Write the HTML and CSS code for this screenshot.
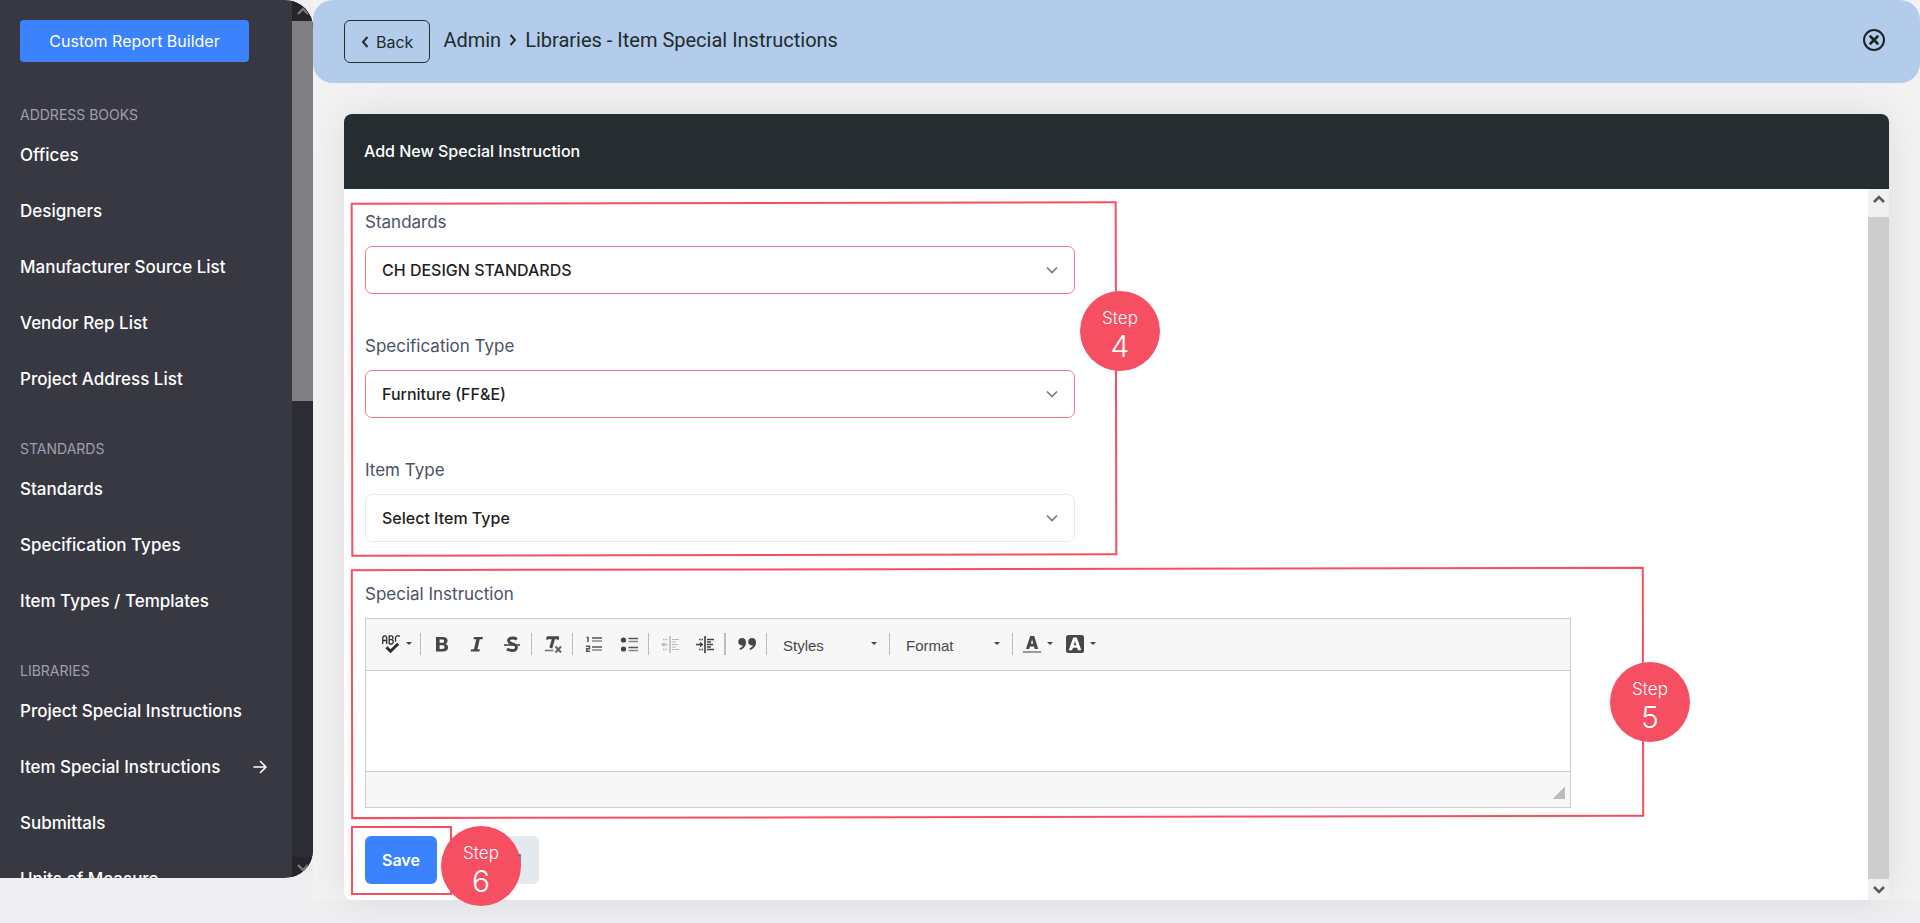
FILE: index.html
```html
<!DOCTYPE html>
<html lang="en">
<head>
<meta charset="utf-8">
<title>Libraries - Item Special Instructions</title>
<link rel="stylesheet" href="styles.css">
</head>
<body>
<div class="app">
  <aside class="sidebar">
    <div class="sidebar-content">
      <button class="report-button" type="button">Custom Report Builder</button>
      <nav class="nav">
        <section class="nav-group">
          <h2 class="nav-title">ADDRESS BOOKS</h2>
          <a class="nav-link" href="#">Offices</a>
          <a class="nav-link" href="#">Designers</a>
          <a class="nav-link" href="#">Manufacturer Source List</a>
          <a class="nav-link" href="#">Vendor Rep List</a>
          <a class="nav-link" href="#">Project Address List</a>
        </section>
        <section class="nav-group">
          <h2 class="nav-title">STANDARDS</h2>
          <a class="nav-link" href="#">Standards</a>
          <a class="nav-link" href="#">Specification Types</a>
          <a class="nav-link" href="#">Item Types / Templates</a>
        </section>
        <section class="nav-group">
          <h2 class="nav-title">LIBRARIES</h2>
          <a class="nav-link" href="#">Project Special Instructions</a>
          <a class="nav-link" href="#">Item Special Instructions
            <svg class="nav-arrow" viewBox="0 0 14 14" width="14" height="14" fill="none" stroke="currentColor" stroke-width="1.6" stroke-linecap="round" stroke-linejoin="round"><path d="M1 7h12M7.5 1.5 13 7l-5.500 5.500"/></svg>
          </a>
          <a class="nav-link" href="#">Submittals</a>
          <a class="nav-link" href="#">Units of Measure</a>
        </section>
      </nav>
    </div>
    <div class="scrollbar scrollbar-dark">
      <div class="scroll-button"><svg viewBox="0 0 12 10" width="12" height="10" fill="none" stroke="currentColor" stroke-width="2.400"><path d="M1 8l5-5 5 5"/></svg></div>
      <div class="scroll-thumb"></div>
      <div class="scroll-track"></div>
      <div class="scroll-button"><svg viewBox="0 0 12 10" width="12" height="10" fill="none" stroke="currentColor" stroke-width="2.400"><path d="M1 2l5 5 5-5"/></svg></div>
    </div>
  </aside>

  <main class="main">
    <header class="topbar">
      <button class="back-button" type="button">
        <svg viewBox="0 0 8 12" width="8" height="12" fill="none" stroke="currentColor" stroke-width="2"><path d="M6.500 1 2 6l4.500 5"/></svg>
        Back
      </button>
      <div class="breadcrumb">
        <a class="crumb" href="#">Admin</a>
        <svg viewBox="0 0 8 12" width="8" height="12" fill="none" stroke="currentColor" stroke-width="2"><path d="M1.500 1 6 6l-4.500 5"/></svg>
        <span>Libraries - Item Special Instructions</span>
      </div>
      <button class="close-button" type="button" aria-label="Close">
        <svg viewBox="0 0 22 22" width="22" height="22" fill="none" stroke="currentColor" stroke-width="2"><circle cx="11" cy="11" r="10"/><path d="M7.500 7.500l7 7M14.500 7.500l-7 7" stroke-width="2.600" stroke-linecap="round"/></svg>
      </button>
    </header>

    <section class="card">
      <h1 class="card-title">Add New Special Instruction</h1>
      <div class="card-body">
        <form class="form">
          <div class="fields">
            <div class="field">
              <label class="label" for="standards">Standards</label>
              <div class="select-wrap">
                <select class="select select-required" id="standards"><option>CH DESIGN STANDARDS</option></select>
                <svg class="chevron" viewBox="0 0 12 8" width="12" height="8" fill="none" stroke="currentColor" stroke-width="1.600"><path d="M1 1.500l5 5 5-5"/></svg>
              </div>
            </div>
            <div class="field">
              <label class="label" for="spec-type">Specification Type</label>
              <div class="select-wrap">
                <select class="select select-required" id="spec-type"><option>Furniture (FF&amp;E)</option></select>
                <svg class="chevron" viewBox="0 0 12 8" width="12" height="8" fill="none" stroke="currentColor" stroke-width="1.600"><path d="M1 1.500l5 5 5-5"/></svg>
              </div>
            </div>
            <div class="field">
              <label class="label" for="item-type">Item Type</label>
              <div class="select-wrap">
                <select class="select" id="item-type"><option>Select Item Type</option></select>
                <svg class="chevron" viewBox="0 0 12 8" width="12" height="8" fill="none" stroke="currentColor" stroke-width="1.600"><path d="M1 1.500l5 5 5-5"/></svg>
              </div>
            </div>
            <div class="outline outline-fields"></div>
            <div class="step step-fields"><span class="step-word">Step</span><span class="step-number">4</span></div>
          </div>

          <div class="editor-field">
            <label class="label" for="instruction">Special Instruction</label>
            <div class="editor">
              <div class="toolbar">
                <button class="tool tool-menu" type="button" aria-label="Spell check">
                  <svg viewBox="0 0 18 18" width="18" height="18" fill="none" stroke="#2f2f2f"><path d="M.7 9V2.500L2 .8h1.400l1.300 1.700V9M.7 5.500h4M7.200 9V.8h2.600l1.100 1v1.800l-1 1.100H7.200m2.700 0 1.200 1.100v2L9.900 9H7.200M18 1.600l-1-.8h-2l-1.500 1.500v4.500" stroke-width="1.300"/><path d="M4.500 12.200l4 4L16.200 8.700" stroke-width="3"/></svg>
                  <i class="caret"></i>
                </button>
                <span class="separator"></span>
                <button class="tool" type="button" aria-label="Bold"><svg viewBox="0 0 18 18" width="18" height="18"><path fill="#474747" fill-rule="evenodd" d="M3 2h6.800c3.300 0 4.800 1.500 4.800 3.800 0 1.600-.8 2.700-2.200 3.100 1.800.4 2.700 1.600 2.700 3.400 0 2.900-2 4.200-5.200 4.200H3zm3.600 2.600v3.200h2.300c1.500 0 2.200-.5 2.200-1.600s-.7-1.600-2.200-1.600zm0 5.600v3.700h2.700c1.500 0 2.200-.6 2.200-1.800 0-1.300-.8-1.900-2.400-1.900z"/></svg></button>
                <button class="tool" type="button" aria-label="Italic"><svg viewBox="0 0 18 18" width="18" height="18"><path fill="#474747" d="M6 2h9l-.5 2.200h-2.700L9.400 14.300h2.500l-.5 2.200H2.700l.5-2.200h2.700L8.300 4.200H5.500z"/></svg></button>
                <button class="tool" type="button" aria-label="Strikethrough"><svg viewBox="0 0 18 18" width="18" height="18" fill="none" stroke="#474747"><path d="M14 4.200C12.600 3.400 11 3 9.500 3 6.900 3 5.500 4 5.500 5.600c0 4 8 2.700 8 6.600 0 2.100-1.700 3.300-4.500 3.300-1.800 0-3.500-.5-5-1.500" stroke-width="2.800"/><path d="M1 10h16" stroke-width="1.600"/></svg></button>
                <span class="separator"></span>
                <button class="tool" type="button" aria-label="Remove format"><svg viewBox="0 0 18 18" width="18" height="18" fill="none" stroke="#474747"><path d="M3 2.800h12M9.900 2.500 6.800 13" stroke-width="3"/><path d="M3 2v3M14.500 2l-.6 3" stroke-width="1.200"/><path d="M.8 15.500h8.500" stroke="#777" stroke-width="1.600"/><path d="M11.500 11.500l5.500 6m0-6-5.500 6" stroke="#666" stroke-width="2"/></svg></button>
                <span class="separator"></span>
                <button class="tool" type="button" aria-label="Numbered list"><svg viewBox="0 0 18 18" width="18" height="18" fill="none" stroke="#555"><path d="M1.500 2.500H3V7M1 11.300h3.500v2.500H1.700v2.500h3.200" stroke-width="1.500"/><path d="M7 3h10M7 12h10" stroke-width="1.600"/><path d="M7 6h10M7 15h10" stroke-width="1.600" stroke="#888"/></svg></button>
                <button class="tool" type="button" aria-label="Bulleted list"><svg viewBox="0 0 18 18" width="18" height="18" fill="none" stroke="#555"><circle cx="3.500" cy="5" r="2.600" fill="#444" stroke="none"/><circle cx="3.500" cy="14" r="2.600" fill="#444" stroke="none"/><path d="M8.500 3.500h9.500M8.500 12.500h9.500" stroke-width="1.600"/><path d="M8.500 6.500h9.500M8.500 15.500h9.500" stroke-width="1.600" stroke="#888"/></svg></button>
                <span class="separator"></span>
                <button class="tool tool-disabled" type="button" disabled aria-label="Decrease indent"><svg viewBox="0 0 18 18" width="18" height="18" fill="none" stroke="#444"><path d="M9 1v17" stroke-width="1.500"/><path d="M11 4.500h7M11 7h4M11 9.500h6M11 12h4M11 14.500h7" stroke-width="1.200"/><path d="M2 4.500h1.500m1 0H6M2 14.500h1.500m1 0H6" stroke-width="1.400"/><path d="M1.500 9.500h5" stroke-width="1.600"/><path d="M3.500 7v5L0 9.500z" fill="#444" stroke="none"/></svg></button>
                <button class="tool" type="button" aria-label="Increase indent"><svg viewBox="0 0 18 18" width="18" height="18" fill="none" stroke="#444"><path d="M9 1v17" stroke-width="1.700"/><path d="M11 4.500h7M11 7h4M11 9.500h6M11 12h4M11 14.500h7" stroke-width="1.400"/><path d="M3 4.500h1.500m1 0H7M3 14.500h1.500m1 0H7" stroke-width="1.400"/><path d="M0 9.500h5" stroke-width="1.600"/><path d="M4 6.800v5.400L7.500 9.500z" fill="#444" stroke="none"/></svg></button>
                <span class="separator separator-bold"></span>
                <button class="tool" type="button" aria-label="Block quote"><svg viewBox="0 0 18 18" width="18" height="18" fill="#474747"><path d="M4 3c2.600 0 4 1.800 4 4.300 0 3.700-2.200 6.700-6 7.700l-.6-1.400c2-.9 3.100-2 3.400-3.300C2 10.800.2 9.200.2 6.800.2 4.500 1.800 3 4 3zM14 3c2.600 0 4 1.800 4 4.300 0 3.700-2.200 6.700-6 7.700l-.6-1.400c2-.9 3.100-2 3.400-3.300-2.800.5-4.600-1.100-4.600-3.500C10.200 4.500 11.800 3 14 3z"/></svg></button>
                <span class="separator"></span>
                <div class="combo"><select class="combo-select" aria-label="Styles"><option>Styles</option></select><i class="caret"></i></div>
                <span class="separator"></span>
                <div class="combo"><select class="combo-select" aria-label="Format"><option>Format</option></select><i class="caret"></i></div>
                <span class="separator"></span>
                <button class="tool tool-menu" type="button" aria-label="Text color">
                  <svg viewBox="0 0 18 18" width="18" height="18"><path fill="#474747" fill-rule="evenodd" d="M7.200 1h4l4 13h-3.400l-.8-2.600H7L6.200 14H3zm.6 7.700h2.500L9.100 4.400z"/><path fill="#999" d="M0 16h18v2H0z"/></svg>
                  <i class="caret"></i>
                </button>
                <button class="tool tool-menu" type="button" aria-label="Background color">
                  <svg viewBox="0 0 18 18" width="18" height="18"><rect width="18" height="18" rx="2.500" fill="#474747"/><path fill="#fff" fill-rule="evenodd" d="M7.200 2.500h3.600l4.500 12.800h-3.400l-.8-2.500H6.900l-.8 2.500H2.700zm.5 7.800h2.600L9 5.900z"/></svg>
                  <i class="caret"></i>
                </button>
              </div>
              <textarea class="editor-text" id="instruction"></textarea>
              <div class="editor-footer"><i class="resize-grip"></i></div>
            </div>
            <div class="outline outline-editor"></div>
            <div class="step step-editor"><span class="step-word">Step</span><span class="step-number">5</span></div>
          </div>

          <div class="actions">
            <div class="save-wrap">
              <button class="button button-save" type="button">Save</button>
              <div class="outline outline-save"></div>
              <div class="step step-save"><span class="step-word">Step</span><span class="step-number">6</span></div>
            </div>
            <button class="button button-cancel" type="button">Cancel</button>
          </div>
        </form>
        <div class="scrollbar scrollbar-light">
          <div class="scroll-button scroll-button-tall"><svg viewBox="0 0 12 10" width="12" height="10" fill="none" stroke="currentColor" stroke-width="2.600"><path d="M1 8l5-5 5 5"/></svg></div>
          <div class="scroll-thumb"></div>
          <div class="scroll-button"><svg viewBox="0 0 12 10" width="12" height="10" fill="none" stroke="currentColor" stroke-width="2.600"><path d="M1 2l5 5 5-5"/></svg></div>
        </div>
      </div>
    </section>
  </main>
</div>
</body>
</html>
```
FILE: styles.css
```css
* {
  box-sizing: border-box;
}

body {
  margin: 0;
  background: #efeff2;
  font-family: Inter, "Liberation Sans", sans-serif;
  font-size: 16px;
  line-height: 24px;
}

button,
select,
textarea {
  font: inherit;
}

svg {
  display: block;
  flex: none;
}

.app {
  display: flex;
  align-items: flex-start;
  height: 100vh;
  overflow: hidden;
}

/* Sidebar */

.sidebar {
  display: flex;
  flex: none;
  width: 313px;
  height: calc(100vh - 45px);
  overflow: hidden;
  border-radius: 0 28px 28px 0;
  background: #383842;
}

.sidebar-content {
  flex: 1;
  padding: 20px;
}

.report-button {
  width: 229px;
  height: 42px;
  padding: 0;
  border: 0;
  border-radius: 4px;
  background: #3b82ff;
  color: #fff;
}

.nav {
  display: flex;
  flex-direction: column;
  gap: 30px;
  margin-top: 41px;
}

.nav-title {
  margin: 0;
  color: #9f9fae;
  font-size: 14px;
  font-weight: 400;
  line-height: 24px;
}

.nav-link {
  display: flex;
  align-items: center;
  justify-content: space-between;
  height: 56px;
  padding-right: 5px;
  color: #fff;
  font-size: 17px;
  font-weight: 500;
  text-decoration: none;
  white-space: nowrap;
}

/* Scrollbars */

.scrollbar {
  display: flex;
  flex: none;
  flex-direction: column;
  width: 21px;
}

.scroll-button {
  display: flex;
  flex: none;
  align-items: center;
  justify-content: center;
  height: 21px;
}

.scroll-button-tall {
  height: 28px;
  padding-bottom: 8px;
}

.scrollbar-dark {
  background: #2c2c35;
  color: #77777b;
}

.scrollbar-dark .scroll-button {
  background: #26262a;
}

.scrollbar-dark .scroll-thumb {
  height: 380px;
  background: #807f84;
}

.scroll-track {
  flex: 1;
}

.scrollbar-light {
  background: #f0f0f0;
  color: #5a5a5a;
}

.scrollbar-light .scroll-thumb {
  flex: 1;
  background: #cdcdcd;
}

/* Page header */

.main {
  flex: 1;
  min-width: 0;
  background: #f2f2f2;
}

.topbar {
  display: flex;
  align-items: flex-start;
  height: 83px;
  padding: 20px 35px 0 31px;
  border-radius: 20px;
  background: #b3cceb;
  color: #222a2c;
}

.back-button {
  display: flex;
  align-items: center;
  gap: 7px;
  height: 43px;
  padding: 0 16px;
  border: 1px solid #262d30;
  border-radius: 6px;
  background: transparent;
  color: inherit;
}

.breadcrumb {
  display: flex;
  align-items: center;
  gap: 8px;
  height: 40px;
  margin-left: 13px;
  font-family: Roboto, sans-serif;
  font-size: 20px;
}

.crumb {
  color: inherit;
  text-decoration: none;
}

.close-button {
  display: flex;
  align-items: center;
  height: 40px;
  margin-left: auto;
  padding: 0;
  border: 0;
  background: transparent;
  color: #1c2224;
}

/* Card */

.card {
  margin: 31px 31px 0;
  border-radius: 8px;
  background: #fff;
  box-shadow: 0 0 40px rgba(20, 10, 30, 0.09);
}

.card-title {
  margin: 0;
  padding: 25px 20px 26px;
  border-radius: 8px 8px 0 0;
  background: #262d30;
  color: #fff;
  font-size: 16px;
  font-weight: 500;
  line-height: 24px;
}

.card-body {
  display: flex;
}

.form {
  flex: 1;
  min-width: 0;
  padding: 21px 21px 16px;
}

.fields {
  position: relative;
  display: flex;
  flex-direction: column;
  gap: 40px;
  max-width: 710px;
}

.field {
  display: flex;
  flex-direction: column;
  gap: 12px;
}

.label {
  color: #4b5265;
  font-size: 17px;
}

.select-wrap {
  display: grid;
  align-items: center;
}

.select {
  grid-area: 1 / 1;
  width: 100%;
  height: 48px;
  padding: 0 48px 0 16px;
  appearance: none;
  border: 1px solid #e4e9ef;
  border-radius: 7px;
  background: #fff;
  color: #1f1f1f;
  font-weight: 500;
}

.select-required {
  border-color: #f6798a;
}

.chevron {
  grid-area: 1 / 1;
  justify-self: end;
  margin-right: 17px;
  color: #77778a;
  pointer-events: none;
}

/* Rich text editor */

.editor-field {
  position: relative;
  display: flex;
  flex-direction: column;
  gap: 12px;
  max-width: 1206px;
  margin-top: 40px;
}

.editor {
  border: 1px solid #cdcdcd;
}

.toolbar {
  display: flex;
  align-items: center;
  height: 52px;
  padding: 0 0 2px 9px;
  border-bottom: 1px solid #cdcdcd;
  background: #f7f7f7;
}

.tool {
  display: flex;
  align-items: center;
  justify-content: center;
  gap: 6px;
  width: 35px;
  height: 34px;
  padding: 0;
  border: 0;
  background: transparent;
}

.tool-menu {
  width: 43px;
}

.tool-disabled {
  opacity: 0.35;
}

.separator {
  width: 1px;
  height: 22px;
  margin: 0 3px 0 2px;
  background: #bcbcbc;
}

.separator-bold {
  width: 2px;
}

.caret {
  border: solid transparent;
  border-width: 3px 3px 0;
  border-top-color: #444;
}

.combo {
  display: grid;
  align-items: center;
  width: 117px;
}

.combo-select {
  grid-area: 1 / 1;
  width: 100%;
  height: 36px;
  padding: 4px 24px 0 13px;
  appearance: none;
  border: 0;
  background: transparent;
  color: #474747;
  font-family: "Liberation Sans", Arial, sans-serif;
  font-size: 15px;
}

.combo .caret {
  grid-area: 1 / 1;
  justify-self: end;
  margin-right: 10px;
  pointer-events: none;
}

.editor-text {
  display: block;
  width: 100%;
  height: 100px;
  padding: 12px;
  border: 0;
  outline: 0;
  resize: none;
}

.editor-footer {
  display: flex;
  align-items: flex-end;
  justify-content: flex-end;
  height: 36px;
  padding: 0 5px 8px;
  border-top: 1px solid #cdcdcd;
  background: #f7f7f7;
}

.resize-grip {
  width: 12px;
  height: 12px;
  background: linear-gradient(135deg, transparent 50%, #bcbcbc 50%);
}

/* Actions */

.actions {
  display: flex;
  gap: 14px;
  margin-top: 28px;
}

.save-wrap {
  position: relative;
}

.button {
  display: block;
  height: 48px;
  padding: 0 17px;
  border: 0;
  border-radius: 6px;
  font-weight: 600;
}

.button-save {
  background: #3b82ff;
  color: #fff;
}

.button-cancel {
  background: #e4e9ee;
  color: #5e6470;
}

/* Walkthrough callouts */

.outline {
  position: absolute;
  border: 2px solid #f74f62;
  pointer-events: none;
  transform: rotate(-0.1deg);
}

.outline-fields {
  inset: -8px -42px -14px -14px;
}

.outline-editor {
  inset: -14px -73px -10px -14px;
}

.outline-save {
  inset: -10px -15px -11px -14px;
}

.step {
  position: absolute;
  display: flex;
  flex-direction: column;
  align-items: center;
  width: 80px;
  height: 80px;
  padding-top: 15px;
  border-radius: 50%;
  background: #f74f62;
  color: #fff;
  font-weight: 300;
}

.step-word {
  font-size: 17px;
  line-height: 24px;
}

.step-number {
  font-size: 30px;
  line-height: 32px;
}

.step-fields {
  top: 81px;
  right: -85px;
}

.step-editor {
  top: 80px;
  right: -119px;
}

.step-save {
  top: -10px;
  left: 76px;
}
```
